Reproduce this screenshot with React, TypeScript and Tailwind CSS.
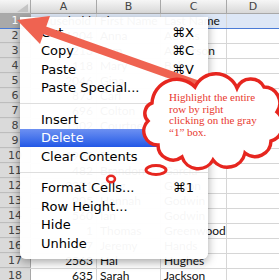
import React from 'react';

const ROWS: [string, string, string][] = [
  ['Household ID', 'First Name', 'Last Name'],
  ['1204', 'Anna', 'Adams'],
  ['2213', 'Tom', 'Anderson'],
  ['118', 'Mary', 'Baker'],
  ['2046', 'Gina', 'Brown'],
  ['873', 'Carl', 'Carter'],
  ['696', 'Colton', 'Clark'],
  ['1502', 'Courtney', 'Davis'],
  ['311', 'Evan', 'Edwards'],
  ['1998', 'Fiona', 'Fisher'],
  ['482', 'Brandon', 'Garcia'],
  ['2371', 'Greg', 'Gibson'],
  ['905', 'Hannah', 'Godwin'],
  ['560', 'Ian', 'Godwin'],
  ['1', 'Thomas', 'Greenwood'],
  ['77', 'Jeremy', 'Hands'],
  ['2563', 'Hal', 'Hughes'],
  ['635', 'Sarah', 'Jackson'],
];

type Item = { label: string; key?: string; active?: boolean } | 'sep';

const MENU: Item[] = [
  { label: 'Cut', key: '⌘X' },
  { label: 'Copy', key: '⌘C' },
  { label: 'Paste', key: '⌘V' },
  { label: 'Paste Special...', key: '⌃⌘V' },
  'sep',
  { label: 'Insert' },
  { label: 'Delete', active: true },
  { label: 'Clear Contents' },
  'sep',
  { label: 'Format Cells...', key: '⌘1' },
  { label: 'Row Height...' },
  { label: 'Hide' },
  { label: 'Unhide' },
];

function Sheet() {
  return (
    <div className="flex flex-col">
      {/* column headers */}
      <div className="flex h-[14px] shrink-0 border-b border-[#a8a8a8] bg-gradient-to-b from-[#f6f6f6] to-[#d8d8d8] text-[11px] leading-[13px] text-[#444] font-['DejaVu_Sans',sans-serif]">
        <div className="relative w-[31px] shrink-0 border-r border-[#a8a8a8]">
          <svg className="absolute right-[2px] bottom-[1px]" width="11" height="8" viewBox="0 0 11 8">
            <polygon points="0,8 11,8 11,0" fill="#c4c4c4" />
          </svg>
        </div>
        <div className="w-[66px] shrink-0 border-r border-[#a8a8a8] text-center">A</div>
        <div className="w-[64px] shrink-0 border-r border-[#a8a8a8] text-center">B</div>
        <div className="w-[66px] shrink-0 border-r border-[#a8a8a8] text-center">C</div>
        <div className="flex-1 text-center">D</div>
      </div>

      {ROWS.map((r, i) => {
        const sel = i === 0;
        return (
          <div
            key={i}
            className={`flex h-[15px] shrink-0 border-b text-[12px] leading-[14px] font-['Lato',sans-serif] text-[#111] ${
              sel ? 'border-[#4a7bd6] bg-[#dde7f6]' : 'border-[#d6d6d6]'
            }`}
          >
            <div
              className={`w-[31px] shrink-0 border-r border-[#a8a8a8] text-center text-[11px] font-['DejaVu_Sans',sans-serif] ${
                sel ? 'bg-[#a9a9a9] text-white' : 'bg-[#dadada] text-[#444] border-b border-b-[#bdbdbd]'
              }`}
            >
              {i + 1}
            </div>
            <div
              className={`w-[66px] shrink-0 border-r border-[#d6d6d6] px-[3px] whitespace-nowrap overflow-hidden ${
                sel ? 'text-left' : 'text-right'
              }`}
            >
              {r[0]}
            </div>
            <div className="w-[64px] shrink-0 border-r border-[#d6d6d6] px-[3px] whitespace-nowrap overflow-hidden">
              {r[1]}
            </div>
            <div className="w-[66px] shrink-0 border-r border-[#d6d6d6] px-[3px] whitespace-nowrap overflow-hidden">
              {r[2]}
            </div>
            <div className="flex-1" />
          </div>
        );
      })}
    </div>
  );
}

function ContextMenu() {
  return (
    <div className="absolute left-[20px] top-[17px] w-[188px] rounded-b-[6px] bg-white/[0.96] pt-[6px] pb-[6px] shadow-[0_3px_10px_rgba(0,0,0,0.35)] font-['DejaVu_Sans',sans-serif] text-[13px] text-black">
      {MENU.map((m, i) =>
        m === 'sep' ? (
          <div key={i} className="my-[6px] h-px bg-[#dedede]" />
        ) : (
          <div
            key={i}
            className={`flex h-[18.5px] items-center justify-between pl-[21px] pr-[14px] ${
              m.active ? 'bg-gradient-to-b from-[#6d90f1] to-[#2257e6] text-white' : ''
            }`}
          >
            <span>{m.label}</span>
            {m.key && <span>{m.key}</span>}
          </div>
        )
      )}
    </div>
  );
}

function Annotation() {
  return (
    <>
      <svg className="absolute inset-0 pointer-events-none" width="279" height="280" viewBox="0 0 279 280">
        {/* arrow */}
        <line x1="44" y1="30" x2="236" y2="98" stroke="#ef6351" strokeWidth="8" />
        <polygon points="17,20 40,44 50,16" fill="#ef6351" />
        {/* thought bubbles */}
        <ellipse cx="111" cy="179" rx="4" ry="3.2" fill="white" stroke="#e6261f" strokeWidth="2.5" />
        <ellipse cx="156" cy="170" rx="10" ry="4.5" fill="white" stroke="#e6261f" strokeWidth="3" />
        {/* cloud */}
        <path
          d="M152,103 A25,25 0 0 1 195,87 A23,23 0 0 1 237,88 A15,15 0 0 1 264,87 A16,16 0 0 1 277,112 A17,17 0 0 1 271,141 A16,16 0 0 1 245,153 A18,18 0 0 1 213,160 A17,17 0 0 1 182,157 A15,15 0 0 1 158,145 A14,14 0 0 1 148,121 A11,11 0 0 1 152,103 Z"
          fill="white"
          stroke="#e6261f"
          strokeWidth="3.5"
        />
      </svg>
      <div className="absolute left-[169px] top-[92px] font-['Liberation_Serif',serif] text-[11px] leading-[11.5px] text-[#e8382e] whitespace-nowrap">
        <div>Highlight the entire</div>
        <div>row by right</div>
        <div>clicking on the gray</div>
        <div>“1” box.</div>
      </div>
    </>
  );
}

export default function App() {
  return (
    <div className="relative w-[279px] h-[280px] overflow-hidden bg-white">
      <Sheet />
      <ContextMenu />
      <Annotation />
    </div>
  );
}
